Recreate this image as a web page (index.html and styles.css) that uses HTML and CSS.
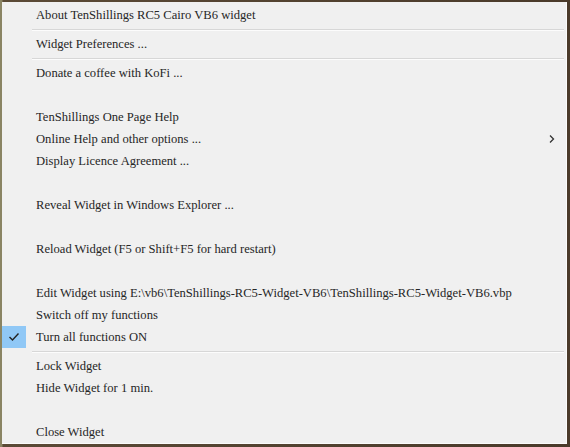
FILE: index.html
```html
<!DOCTYPE html>
<html>
<head>
<meta charset="utf-8">
<link rel="stylesheet" href="styles.css">
</head>
<body>
<div class="menu">
  <div class="item">About TenShillings RC5 Cairo VB6 widget</div>
  <div class="sep"></div>
  <div class="item">Widget Preferences ...</div>
  <div class="sep"></div>
  <div class="item">Donate a coffee with KoFi ...</div>
  <div class="item blank"></div>
  <div class="item">TenShillings One Page Help</div>
  <div class="item sub">Online Help and other options ...
    <svg class="arrow" width="8" height="10" viewBox="0 0 8 10"><path d="M2 1.5 L5.5 5 L2 8.5" fill="none" stroke="#333" stroke-width="1.3"/></svg>
  </div>
  <div class="item">Display Licence Agreement ...</div>
  <div class="item blank"></div>
  <div class="item">Reveal Widget in Windows Explorer ...</div>
  <div class="item blank"></div>
  <div class="item">Reload Widget (F5 or Shift+F5 for hard restart)</div>
  <div class="item blank"></div>
  <div class="item">Edit Widget using E:\vb6\TenShillings-RC5-Widget-VB6\TenShillings-RC5-Widget-VB6.vbp</div>
  <div class="item">Switch off my functions</div>
  <div class="item checked">
    <span class="check"><svg width="12" height="10" viewBox="0 0 12 10"><path d="M1.5 5 L4.5 8 L10.5 1.5" fill="none" stroke="#222" stroke-width="1.4"/></svg></span>
    Turn all functions ON
  </div>
  <div class="sep"></div>
  <div class="item">Lock Widget</div>
  <div class="item">Hide Widget for 1 min.</div>
  <div class="item blank"></div>
  <div class="item">Close Widget</div>
</div>
</body>
</html>
```
FILE: styles.css
```css
html, body {
  margin: 0;
  padding: 0;
}
body {
  width: 570px;
  height: 447px;
  background: linear-gradient(90deg, #8a8463 0, #8a8463 2px, #5b4a36 3px, #4a3a2a 100%);
  overflow: hidden;
}
.menu {
  box-sizing: border-box;
  margin: 2px 3px 0 2px;
  width: 565px;
  height: 442px;
  background: #f0f0f0;
  border-right: 1px solid #fbfbfb;
  border-bottom: 1px solid #fbfbfb;
  padding: 2px 0 0 0;
  font-family: "Liberation Serif", serif;
  font-size: 12.6px;
  color: #262626;
}
.item {
  position: relative;
  height: 22px;
  line-height: 22px;
  padding-left: 34px;
  white-space: nowrap;
}
.sep {
  height: 7px;
  display: flex;
  align-items: center;
  margin-left: 30px;
  margin-right: 2px;
}
.sep::before {
  content: "";
  flex: 1;
  height: 1px;
  background: #d7d7d7;
  box-shadow: 0 1px 0 #fcfcfc;
}
.arrow {
  position: absolute;
  right: 10px;
  top: 6px;
}
.check {
  position: absolute;
  left: 0;
  top: 0;
  width: 24px;
  height: 22px;
  background: #90c8f6;
  display: flex;
  align-items: center;
  justify-content: center;
}
```
